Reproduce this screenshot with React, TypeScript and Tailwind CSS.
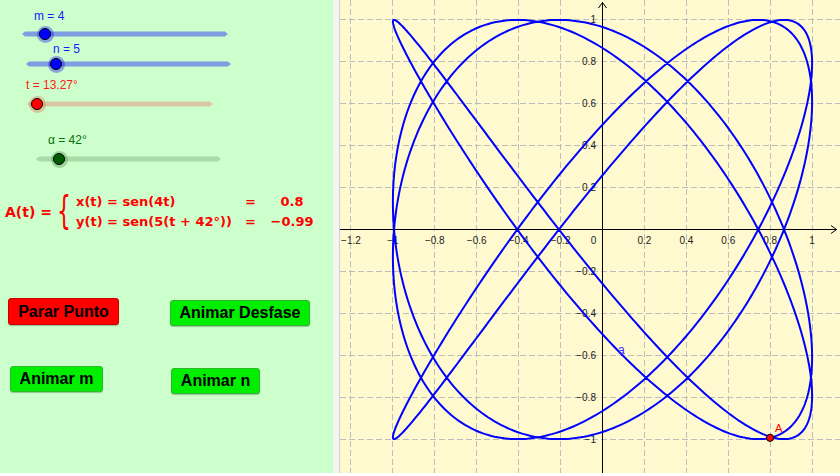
import React from "react";

const W = 500;
const H = 473;
const OX = 262.5;
const OY = 229.5;
const S = 209.6;
const px = (x: number) => OX + x * S;
const py = (y: number) => OY - y * S;
const rad = (d: number) => (d * Math.PI) / 180;

const fmt = (v: number) => {
  const s = v.toFixed(1).replace(/\.0$/, "");
  return s.replace("-", "\u2212");
};

// x(t) = sen(4t), y(t) = sen(5(t + 42°))
const curvePath = (() => {
  const pts: string[] = [];
  for (let i = 0; i <= 1440; i++) {
    const t = rad(i * 0.25);
    const x = Math.sin(4 * t);
    const y = Math.sin(5 * (t + rad(42)));
    pts.push(`${i === 0 ? "M" : "L"}${px(x).toFixed(2)},${py(y).toFixed(2)}`);
  }
  return pts.join(" ");
})();

const Slider = ({
  label,
  labelClass,
  labelLeft,
  labelMt,
  trackLeft,
  trackMt,
  width,
  knob,
  trackColor,
  haloClass,
  dotClass,
}: {
  label: string;
  labelClass: string;
  labelLeft: string;
  labelMt: string;
  trackLeft: string;
  trackMt: string;
  width: number;
  knob: number;
  trackColor: string;
  haloClass: string;
  dotClass: string;
}) => (
  <>
    <div className={`h-[14px] text-[12px] leading-[14px] ${labelMt} ${labelLeft} ${labelClass}`}>{label}</div>
    <div className={`relative h-[14px] ${trackMt} ${trackLeft}`} style={{ width }}>
      <svg width={width} height={14} className="block">
        <path
          d={`M0,7 L3,4.5 L${width - 4},4.5 L${width - 4},4 L${width},7 L${width - 4},10 L${width - 4},9.5 L3,9.5 Z`}
          fill={trackColor}
        />
      </svg>
      <div
        className={`absolute top-[-1.5px] flex h-[17px] w-[17px] items-center justify-center rounded-full ${haloClass}`}
        style={{ left: knob - 8.5 }}
      >
        <div className={`h-[12px] w-[12px] rounded-full border border-black ${dotClass}`} />
      </div>
    </div>
  </>
);

const Graph = () => {
  const xs = [-6, -5, -4, -3, -2, -1, 1, 2, 3, 4, 5];
  const ys = [-5, -4, -3, -2, -1, 1, 2, 3, 4, 5];
  const ax = { x: 0.7995, y: -0.9939 };
  return (
    <svg width={W} height={H} className="block" style={{ fontFamily: '"Liberation Sans", Arial, sans-serif' }}>
      <g stroke="#bdbdbd" strokeWidth={1} strokeDasharray="6 3" shapeRendering="crispEdges">
        {xs.map((k) => (
          <line key={`vx${k}`} x1={px(k * 0.2)} y1={0} x2={px(k * 0.2)} y2={H} />
        ))}
        {ys.map((k) => (
          <line key={`hy${k}`} x1={0} y1={py(k * 0.2)} x2={W} y2={py(k * 0.2)} />
        ))}
      </g>
      <g stroke="#000" strokeWidth={1} fill="none">
        <line x1={0} y1={OY} x2={W - 3} y2={OY} shapeRendering="crispEdges" />
        <path d={`M${W - 9},${OY - 4} L${W - 3.5},${OY} L${W - 9},${OY + 4}`} />
        <line x1={OX} y1={H} x2={OX} y2={2} shapeRendering="crispEdges" />
        <path d={`M${OX - 4},8 L${OX},2.5 L${OX + 4},8`} />
      </g>
      <g fontSize={10} fill="#222">
        {xs.map((k) => (
          <text key={`lx${k}`} x={px(k * 0.2)} y={OY + 14} textAnchor="middle">
            {fmt(k * 0.2)}
          </text>
        ))}
        <text x={OX - 9} y={OY + 14} textAnchor="middle">
          0
        </text>
        {ys.map((k) => (
          <text key={`ly${k}`} x={OX - 6.5} y={py(k * 0.2) + 3.5} textAnchor="end">
            {fmt(k * 0.2)}
          </text>
        ))}
      </g>
      <path d={curvePath} fill="none" stroke="#0000ff" strokeWidth={2} strokeLinejoin="round" />
      <text x={278} y={354} fontSize={12} fill="#3030ff">
        a
      </text>
      <circle cx={px(ax.x)} cy={py(ax.y)} r={3.6} fill="#ff0000" stroke="#000" strokeWidth={1} />
      <text x={435} y={432} fontSize={11} fill="#ff0000">
        A
      </text>
    </svg>
  );
};

const redBtn =
  "flex items-center justify-center rounded-[3px] border border-[#c80000] bg-[#ff0000] text-[16px] font-bold text-black shadow-[0_1px_1px_rgba(0,0,0,0.25)]";
const greenBtn =
  "flex items-center justify-center rounded-[3px] border border-[#2fb82f] bg-[#00ee00] text-[16px] font-bold text-black shadow-[0_1px_1px_rgba(0,0,0,0.25)]";

export default function App() {
  return (
    <div className="w-[840px] bg-white" style={{ fontFamily: '"Liberation Sans", Arial, sans-serif' }}>
      <div className="flex h-[473px] overflow-hidden">
        {/* Panel izquierdo */}
        <div className="flex w-[333px] flex-col bg-[#ccffcc]">
          <Slider
            label="m = 4"
            labelClass="text-[#1a1aff]"
            labelLeft="ml-[34px]"
            labelMt="mt-[9px]"
            trackLeft="ml-[22px]"
            trackMt="mt-[4px]"
            width={206}
            knob={23}
            trackColor="#7f9de3"
            haloClass="bg-[#0000ff]/35"
            dotClass="bg-[#0000ff]"
          />
          <Slider
            label="n = 5"
            labelClass="text-[#1a1aff]"
            labelLeft="ml-[53px]"
            labelMt="mt-[1px]"
            trackLeft="ml-[26px]"
            trackMt="mt-[1px]"
            width={205}
            knob={30}
            trackColor="#7f9de3"
            haloClass="bg-[#0000ff]/35"
            dotClass="bg-[#0000ff]"
          />
          <Slider
            label="t = 13.27°"
            labelClass="text-[#ff1a1a]"
            labelLeft="ml-[26px]"
            labelMt="mt-[7px]"
            trackLeft="ml-[27px]"
            trackMt="mt-[5px]"
            width={186}
            knob={10}
            trackColor="#d9c8a2"
            haloClass="bg-[#e08060]/45"
            dotClass="bg-[#ff0000]"
          />
          <Slider
            label="α = 42°"
            labelClass="text-[#0a700a]"
            labelLeft="ml-[48px]"
            labelMt="mt-[22px]"
            trackLeft="ml-[36px]"
            trackMt="mt-[5px]"
            width={185}
            knob={23}
            trackColor="#a6daa6"
            haloClass="bg-[#4a9a4a]/40"
            dotClass="bg-[#005c00]"
          />

          {/* Fórmula */}
          <div
            className="ml-[5px] mt-[26px] flex h-[40px] items-center font-bold text-[#ff0000]"
            style={{ fontFamily: '"DejaVu Sans", sans-serif' }}
          >
            <div className="w-[52px] text-[14px]">A(t) =</div>
            <div className="flex w-[19px] items-center justify-start">
              <span className="inline-block origin-center scale-y-[1.75] text-[22px] font-normal leading-[24px]">{"{"}</span>
            </div>
            <div className="grid grid-cols-[169px_12px_70px] text-[13px] leading-[20px]">
              <div>x(t) = sen(4t)</div>
              <div>=</div>
              <div className="text-center">0.8</div>
              <div>y(t) = sen(5(t + 42°))</div>
              <div>=</div>
              <div className="text-center">−0.99</div>
            </div>
          </div>

          {/* Botones */}
          <div className="mt-[66px] flex items-start">
            <div className={`ml-[8px] h-[27px] w-[111px] ${redBtn}`}>Parar Punto</div>
            <div className={`ml-[51px] mt-[2px] h-[26px] w-[140px] ${greenBtn}`}>Animar Desfase</div>
          </div>
          <div className="mt-[40px] flex items-start">
            <div className={`ml-[10px] h-[26px] w-[93px] ${greenBtn}`}>Animar m</div>
            <div className={`ml-[68px] mt-[2px] h-[26px] w-[89px] ${greenBtn}`}>Animar n</div>
          </div>
        </div>

        <div className="w-[6px] bg-[#f4f4f4]" />
        <div className="w-[1px] bg-[#d2d2d2]" />

        {/* Vista gráfica */}
        <div className="w-[500px] bg-[#fff9cf]">
          <Graph />
        </div>
      </div>
    </div>
  );
}
